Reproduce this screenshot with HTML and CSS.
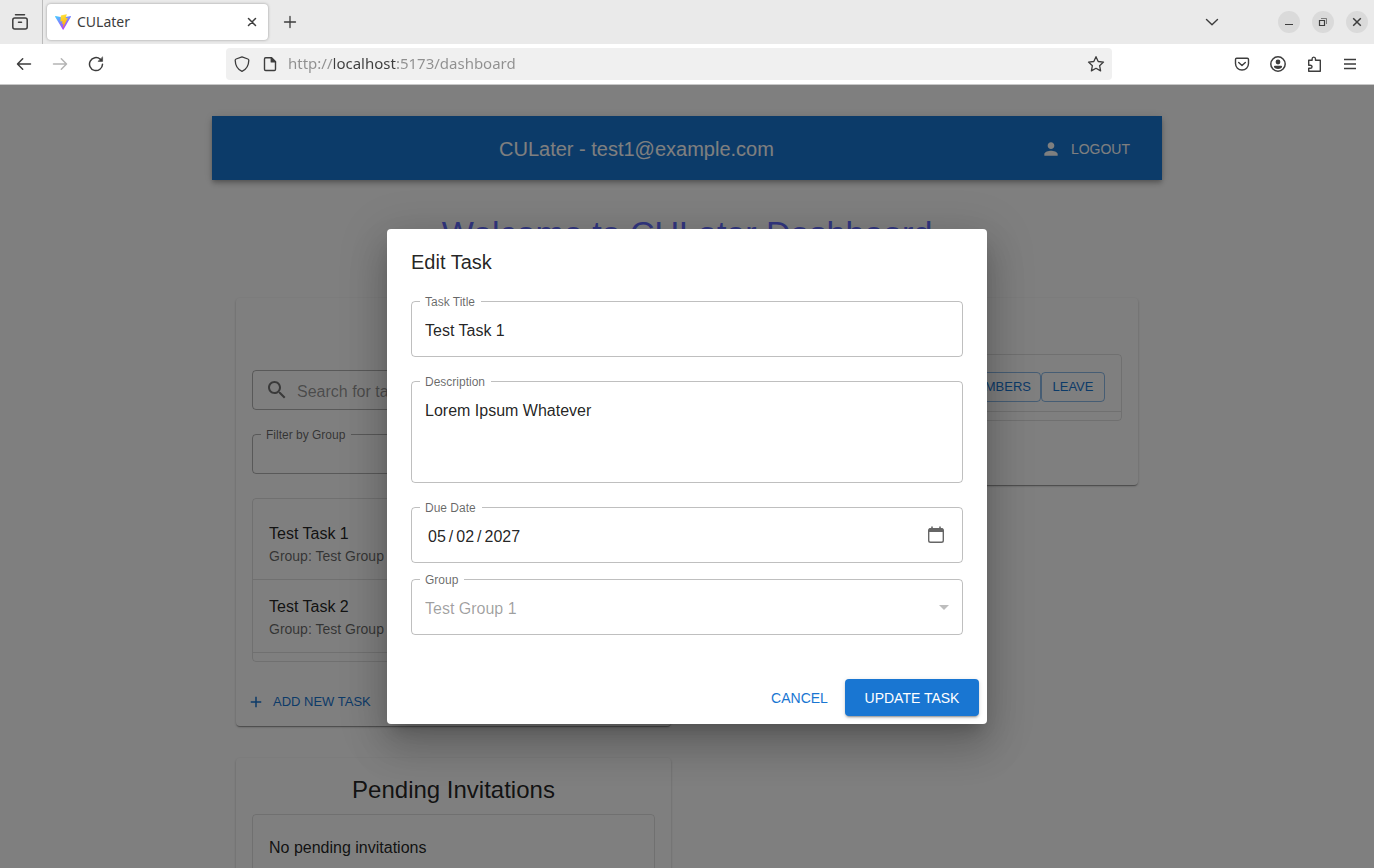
FILE: index.html
```
<!DOCTYPE html>
<html lang="en">
<head>
<meta charset="utf-8">
<title>CULater</title>
<link rel="stylesheet" href="styles.css">
</head>
<body>
<header class="browser">
  <div class="tabstrip">
    <button class="tool-btn archive" aria-label="Recent browsing">
      <svg width="18" height="18" viewBox="0 0 18 18" fill="none" stroke="currentColor" stroke-width="1.500" stroke-linecap="round"><path d="M4.500 1.800h9"/><rect x="1.800" y="5" width="14.400" height="11" rx="2"/><path d="M7.500 9.200h3"/></svg>
    </button>
    <div class="tab">
      <svg width="16" height="16" viewBox="0 0 32 32"><defs><linearGradient id="gv" x1="0" y1="0" x2=".6" y2="1"><stop offset="0" stop-color="#41d1ff"/><stop offset="1" stop-color="#bd34fe"/></linearGradient><linearGradient id="gb" x1=".4" y1="0" x2=".6" y2="1"><stop offset="0" stop-color="#ffea83"/><stop offset=".1" stop-color="#ffdd35"/><stop offset="1" stop-color="#ffa800"/></linearGradient></defs><path fill="url(#gv)" d="M31.900 5.500 17 31.200c-.3.600-1.100.6-1.500 0L.2 5.500C-.1 4.900.4 4.100 1.100 4.200L16.100 6.800h.3L31 4.200c.7-.1 1.200.6.9 1.300z"/><path fill="url(#gb)" d="M23 .6 12 2.700c-.2 0-.4.2-.4.400l-.7 11.500c0 .3.300.5.500.4l3.100-.7c.3-.1.500.2.5.5l-.9 4.500c-.1.300.2.600.500.500l1.900-.6c.3-.1.600.2.500.500l-1.400 7c-.1.400.5.700.8.300l.1-.3 9-18c.2-.3-.1-.7-.4-.600l-3.200.6c-.3.100-.6-.2-.500-.5l2.100-7.200c.1-.3-.2-.6-.5-.500z"/></svg>
      <span class="tab-title">CULater</span>
      <button class="tab-close" aria-label="Close tab"><svg width="10" height="10" viewBox="0 0 10 10" stroke="currentColor" stroke-width="1.500" stroke-linecap="round"><path d="M1.500 1.500l7 7M8.500 1.500l-7 7"/></svg></button>
    </div>
    <button class="tool-btn" aria-label="New tab"><svg width="14" height="14" viewBox="0 0 14 14" stroke="currentColor" stroke-width="1.300" stroke-linecap="round"><path d="M7 1.500v11M1.500 7h11"/></svg></button>
    <button class="tool-btn list-tabs" aria-label="List all tabs"><svg width="14" height="14" viewBox="0 0 14 14" fill="none" stroke="currentColor" stroke-width="1.400" stroke-linecap="round" stroke-linejoin="round"><path d="M1.500 4.500 7 9.800l5.500-5.300"/></svg></button>
    <div class="window-buttons">
      <button aria-label="Minimize"><svg width="10" height="10" viewBox="0 0 10 10" stroke="currentColor"><path d="M1 7.500h8"/></svg></button>
      <button aria-label="Restore"><svg width="10" height="10" viewBox="0 0 10 10" fill="none" stroke="currentColor"><path d="M1.500 3.500h5v5h-5z" stroke-width="1.200"/><path d="M3 1.500h5.500V7" opacity=".6"/></svg></button>
      <button aria-label="Close"><svg width="10" height="10" viewBox="0 0 10 10" stroke="currentColor" stroke-width="1.500"><path d="M1.200 1.200l7.600 7.600M8.800 1.200l-7.600 7.600"/></svg></button>
    </div>
  </div>
  <nav class="toolbar">
    <div class="tools">
      <button class="tool-btn" aria-label="Back"><svg width="16" height="16" viewBox="0 0 16 16" fill="none" stroke="currentColor" stroke-width="1.500" stroke-linecap="round" stroke-linejoin="round"><path d="M14.500 8H1.700M6.700 2.800 1.500 8l5.200 5.200"/></svg></button>
      <button class="tool-btn" aria-label="Forward" disabled><svg width="16" height="16" viewBox="0 0 16 16" fill="none" stroke="currentColor" stroke-width="1.500" stroke-linecap="round" stroke-linejoin="round"><path d="M1.500 8h12.800M9.300 2.800 14.500 8l-5.200 5.200"/></svg></button>
      <button class="tool-btn" aria-label="Reload"><svg width="16" height="16" viewBox="0 0 16 16" fill="none" stroke="currentColor" stroke-width="1.500" stroke-linecap="round"><path d="M14.500 8.200A6.500 6.500 0 1 1 12.300 3.200"/><path d="M14.600 1.200v4.200h-4.300z" fill="currentColor" stroke-width=".6" stroke-linejoin="round"/></svg></button>
    </div>
    <div class="urlbar">
      <svg width="16" height="16" viewBox="0 0 16 16" fill="none" stroke="currentColor" stroke-width="1.300" stroke-linejoin="round"><path d="M8 .9 13.900 3c.6.200.9.600.9 1.200C14.700 9.500 12.500 13.300 8 15.300 3.500 13.300 1.300 9.500 1.200 4.200c0-.6.3-1 .9-1.200z"/></svg>
      <svg width="16" height="16" viewBox="0 0 16 16" fill="none" stroke="currentColor" stroke-width="1.400" stroke-linejoin="round"><path d="M3.700 1.700h5.800l4 4v7.600c0 .7-.5 1.200-1.200 1.200H3.700c-.7 0-1.200-.5-1.200-1.200V2.900c0-.7.500-1.200 1.200-1.200z"/><path d="M9.300 1.700v4.200h4.200z" fill="currentColor"/></svg>
      <input class="url" type="text" aria-label="Address" value="http://localhost:5173/dashboard">
      <button class="tool-btn star" aria-label="Bookmark this page"><svg width="18" height="18" viewBox="0 0 18 18" fill="none" stroke="currentColor" stroke-width="1.300" stroke-linejoin="round"><path d="m9 1.700 2.200 4.800 5.300.6-3.900 3.600 1 5.200L9 13.300l-4.600 2.600 1-5.200L1.500 7.100l5.300-.6z"/></svg></button>
    </div>
    <div class="tools">
      <button class="tool-btn" aria-label="Save to Pocket"><svg width="16" height="16" viewBox="0 0 16 16" fill="none" stroke="currentColor" stroke-width="1.400" stroke-linecap="round" stroke-linejoin="round"><path d="M2.700 2.200h10.600c.7 0 1.200.5 1.200 1.200V7.500c0 3.700-2.900 6.500-6.500 6.500s-6.500-2.800-6.500-6.500V3.400c0-.7.500-1.200 1.200-1.200z"/><path d="M4.700 6.500 8 9.500l3.300-3"/></svg></button>
      <button class="tool-btn" aria-label="Account"><svg width="16" height="16" viewBox="0 0 16 16"><circle cx="8" cy="8" r="7.200" fill="none" stroke="currentColor" stroke-width="1.500"/><circle cx="8" cy="6" r="2.400" fill="currentColor"/><path d="M4.800 9.800h6.400c.5 0 .9.400.9.900 0 1.200-1.900 2.200-4.100 2.200s-4.100-1-4.100-2.200c0-.5.400-.9.900-.9z" fill="currentColor"/></svg></button>
      <button class="tool-btn" aria-label="Extensions"><svg width="16" height="16" viewBox="0 0 16 16" fill="none" stroke="currentColor" stroke-width="1.400" stroke-linejoin="round"><path d="M2.700 7.200V4.300h3.400V2.900c0-2.400 3.400-2.400 3.400 0v1.400h4.800v11H2.700v-3h1.600c2.300 0 2.300-3.100 0-3.100H2.700z"/></svg></button>
      <button class="tool-btn" aria-label="Open menu"><svg width="14" height="14" viewBox="0 0 14 14" stroke="currentColor" stroke-width="1.300"><path d="M1 2.500h12M1 7h12M1 11.500h12"/></svg></button>
    </div>
  </nav>
</header>

<div class="viewport">
  <main class="app">
    <header class="appbar">
      <span class="appbar-title">CULater - test1@example.com</span>
      <button class="logout"><svg width="20" height="20" viewBox="0 0 24 24" fill="currentColor"><path d="M12 12c2.210 0 4-1.790 4-4s-1.790-4-4-4-4 1.790-4 4 1.790 4 4 4m0 2c-2.670 0-8 1.340-8 4v2h16v-2c0-2.660-5.330-4-8-4"/></svg>LOGOUT</button>
    </header>
    <h1 class="welcome">Welcome to CULater Dashboard</h1>
    <div class="columns">
      <div class="column">
        <section class="card">
          <h2 class="card-title">Tasks</h2>
          <div class="filters">
            <div class="search">
              <svg width="24" height="24" viewBox="0 0 24 24" fill="currentColor"><path d="M15.500 14h-.79l-.28-.27C15.410 12.590 16 11.110 16 9.500 16 5.910 13.090 3 9.500 3S3 5.910 3 9.500 5.910 16 9.500 16c1.610 0 3.090-.59 4.230-1.570l.27.28v.79l5 4.990L20.490 19zm-6 0C7.010 14 5 11.990 5 9.500S7.010 5 9.500 5 14 7.010 14 9.500 11.990 14 9.500 14"/></svg>
              <input type="text" placeholder="Search for tasks" aria-label="Search for tasks">
            </div>
            <div class="field small">
              <label for="filter">Filter by Group</label>
              <select id="filter"><option></option></select>
            </div>
          </div>
          <ul class="list">
            <li><p class="primary">Test Task 1</p><p class="secondary">Group: Test Group 1</p></li>
            <li><p class="primary">Test Task 2</p><p class="secondary">Group: Test Group 1</p></li>
          </ul>
          <div class="card-actions">
            <button class="add"><svg width="18" height="18" viewBox="0 0 24 24" fill="currentColor"><path d="M19 13h-6v6h-2v-6H5v-2h6V5h2v6h6z"/></svg>ADD NEW TASK</button>
          </div>
        </section>
        <section class="card">
          <h2 class="card-title">Pending Invitations</h2>
          <ul class="list plain">
            <li><p class="primary">No pending invitations</p></li>
          </ul>
        </section>
      </div>
      <div class="column">
        <section class="card">
          <h2 class="card-title">Groups</h2>
          <ul class="list">
            <li class="group-row"><button class="outlined">MEMBERS</button><button class="outlined">LEAVE</button></li>
          </ul>
          <div class="card-actions"></div>
        </section>
      </div>
    </div>
  </main>

  <div class="backdrop">
    <form class="dialog" role="dialog" aria-labelledby="dialog-title">
      <h2 class="dialog-title" id="dialog-title">Edit Task</h2>
      <div class="dialog-content">
        <div class="field">
          <label for="title">Task Title</label>
          <input id="title" type="text" value="Test Task 1">
        </div>
        <div class="field">
          <label for="description">Description</label>
          <textarea id="description" rows="3">Lorem Ipsum Whatever</textarea>
        </div>
        <div class="field-group">
          <div class="field">
            <label for="due">Due Date</label>
            <input id="due" type="date" value="2027-05-02">
            <svg class="calendar" width="18" height="18" viewBox="0 0 18 18"><path d="M2 2.500h14V6H2z" fill="currentColor"/><rect x="1.700" y="2.700" width="14.600" height="13.600" rx="1.800" fill="none" stroke="currentColor" stroke-width="1.400"/><path d="M5 .5v3M13 .5v3" stroke="currentColor" stroke-width="1.600"/></svg>
          </div>
          <div class="field">
            <label for="group">Group</label>
            <select id="group" disabled><option>Test Group 1</option></select>
            <svg class="caret" width="24" height="24" viewBox="0 0 24 24" fill="currentColor"><path d="m7 10 5 5 5-5z"/></svg>
          </div>
        </div>
      </div>
      <div class="dialog-actions">
        <button type="button" class="text-btn">CANCEL</button>
        <button type="button" class="contained">UPDATE TASK</button>
      </div>
    </form>
  </div>
</div>
</body>
</html>
```
FILE: styles.css
```
* { box-sizing: border-box; }
body {
  margin: 0;
  height: 100vh;
  display: flex;
  flex-direction: column;
  overflow: hidden;
  font-family: "Liberation Sans", Arial, sans-serif;
  font-size: 16px;
  line-height: 24px;
  color: rgba(0, 0, 0, .87);
  background: #fff;
}
h1, h2, p, ul { margin: 0; padding: 0; font-weight: 400; }
ul { list-style: none; }
svg { display: block; flex: none; }
button, input, select, textarea { font: inherit; color: inherit; margin: 0; }
button { border: 0; background: none; padding: 0; display: flex; align-items: center; justify-content: center; }
input, select, textarea { border: 0; background: none; outline: 0; appearance: none; width: 100%; min-width: 0; }

/* browser frame */
.browser {
  position: relative;
  z-index: 1;
  flex: none;
  color: #3d3d3d;
  font-family: "Noto Sans", "Open Sans", sans-serif;
  font-size: 14px;
  box-shadow: 0 1px #c8c8c8;
}
.tabstrip { display: flex; align-items: center; height: 44px; background: #eaeaea; padding-right: 6px; }
.tool-btn { width: 36px; height: 32px; flex: none; }
.tool-btn:disabled { color: #b4b4b4; }
.archive { width: 43px; height: 44px; border-right: 1px solid #bbb; padding-right: 3px; }
.tab {
  display: flex;
  align-items: center;
  gap: 6px;
  width: 221px;
  height: 36px;
  margin: 0 4px;
  padding: 0 6px 0 8px;
  border-radius: 4px;
  background: #fff;
  box-shadow: 0 0 3px rgba(0, 0, 0, .35);
}
.tab-title { flex: 1; }
.tab-close { width: 20px; height: 20px; }
.list-tabs { margin-left: auto; }
.window-buttons { display: flex; gap: 12px; padding-left: 48px; }
.window-buttons button { width: 22px; height: 22px; border-radius: 50%; background: #dadada; }
.toolbar { display: flex; align-items: center; justify-content: space-between; gap: 112px; height: 40px; padding: 0 6px; background: #fff; }
.tools { display: flex; }
.urlbar {
  flex: 1;
  display: flex;
  align-items: center;
  height: 32px;
  gap: 12px;
  padding-left: 8px;
  border-radius: 4px;
  background: #f0f0f0;
}
.url {
  margin-left: -2px;
  padding: 0 0 2px;
  font-size: 15px;
  color: #8f8f8f;
  background: linear-gradient(90deg, #8f8f8f 46px, #3d3d3d 46px, #3d3d3d 109px, #8f8f8f 109px);
  background-clip: text;
  -webkit-background-clip: text;
  -webkit-text-fill-color: transparent;
}
.star { width: 32px; }

/* dashboard */
.viewport { position: relative; flex: 1; min-height: 0; overflow: hidden; padding: 32px; }
.app { max-width: 950px; margin: 0 auto; }
.appbar {
  display: flex;
  align-items: center;
  height: 64px;
  padding: 2px 24px 0;
  color: #fff;
  background: #1976d2;
  box-shadow: 0 2px 4px -1px rgba(0, 0, 0, .2), 0 4px 5px rgba(0, 0, 0, .14), 0 1px 10px rgba(0, 0, 0, .12);
}
.appbar-title { flex: 1; text-align: center; font-size: 20px; line-height: 32px; }
.logout { gap: 10px; padding: 6px 8px 6px 4px; font-size: 14px; }
.welcome { padding: 32px 0 44px; text-align: center; font-size: 34px; line-height: 42px; color: #646cff; }
.columns { display: grid; grid-template-columns: 1fr 1fr; gap: 32px; padding: 0 24px; align-items: start; }
.column { display: grid; gap: 32px; min-width: 0; }
.card {
  padding: 16px 16px 0;
  border-radius: 4px;
  background: #fff;
  box-shadow: 0 2px 1px -1px rgba(0, 0, 0, .2), 0 1px 1px rgba(0, 0, 0, .14), 0 1px 3px rgba(0, 0, 0, .2);
}
.card-title { padding-bottom: 8px; text-align: center; font-size: 24px; line-height: 32px; }
.filters { display: grid; gap: 24px; padding: 16px 0 24px; }
.search { display: flex; align-items: center; gap: 8px; height: 40px; padding: 0 12px; border: 1px solid rgba(0, 0, 0, .3); border-radius: 4px; }
.search svg { color: rgba(0, 0, 0, .54); }
.search input { padding: 3px 0 0; }
.search input::placeholder { color: rgba(0, 0, 0, .42); }
.list { padding: 8px 0; border: 1px solid rgba(0, 0, 0, .12); border-radius: 4px; }
.list li { padding: 15px 16px 13px; border-bottom: 1px solid rgba(0, 0, 0, .12); }
.list.plain li { padding: 13px 16px; border: 0; }
.secondary { font-size: 14px; line-height: 20px; color: rgba(0, 0, 0, .6); }
.list .group-row { display: flex; justify-content: flex-end; padding: 9px 16px; }
.card-actions { margin: 16px -8px 0; min-height: 48px; display: flex; align-items: center; }
.add { gap: 8px; padding: 4px 3px; font-size: 13px; color: #1976d2; }
.outlined { min-width: 64px; height: 30px; padding: 0 9px; border: 1px solid rgba(25, 118, 210, .5); border-radius: 4px; font-size: 13px; color: #1976d2; }

/* modal */
.backdrop { position: absolute; inset: 0; display: grid; place-items: center; background: rgba(0, 0, 0, .5); }
.dialog {
  width: 600px;
  max-width: 100%;
  border-radius: 4px;
  background: #fff;
  box-shadow: 0 11px 15px -7px rgba(0, 0, 0, .2), 0 24px 38px 3px rgba(0, 0, 0, .14), 0 9px 46px 8px rgba(0, 0, 0, .12);
}
.dialog-title { padding: 17px 24px 15px; font-size: 20px; line-height: 32px; }
.dialog-content { display: grid; gap: 24px; padding: 8px 24px 36px; }
.field-group { display: grid; gap: 16px; }
.field { position: relative; display: flex; align-items: center; min-height: 56px; border: 1px solid rgba(0, 0, 0, .25); border-radius: 4px; }
.small { min-height: 40px; border-color: rgba(0, 0, 0, .3); }
.field label {
  position: absolute;
  left: 8px;
  top: -8px;
  padding: 0 6px 0 5px;
  font-size: 12px;
  line-height: 16px;
  color: rgba(0, 0, 0, .6);
  background: #fff;
}
.field input, .field select { padding: 4px 13px 0; }
.field textarea { display: block; height: 100px; padding: 17px 13px 0; resize: none; overflow: hidden; }
.field select:disabled { opacity: 1; color: rgba(0, 0, 0, .38); }
input[type="date"]::-webkit-calendar-picker-indicator { display: none; }
input[type="date"]::-webkit-datetime-edit { padding: 0 2px; }
input[type="date"]::-webkit-datetime-edit-text { padding: 0 2px; }
.calendar { margin-right: 17px; color: #666; }
.caret { margin-right: 6px; color: rgba(0, 0, 0, .26); }
.dialog-actions { display: flex; justify-content: flex-end; gap: 8px; padding: 8px; font-size: 14px; }
.text-btn, .contained { height: 37px; border-radius: 4px; }
.text-btn { min-width: 75px; padding: 2px 8px 0; color: #1976d2; }
.contained {
  min-width: 134px;
  padding: 2px 16px 0;
  color: #fff;
  background: #1976d2;
  box-shadow: 0 3px 1px -2px rgba(0, 0, 0, .2), 0 2px 2px rgba(0, 0, 0, .14), 0 1px 5px rgba(0, 0, 0, .12);
}
```
